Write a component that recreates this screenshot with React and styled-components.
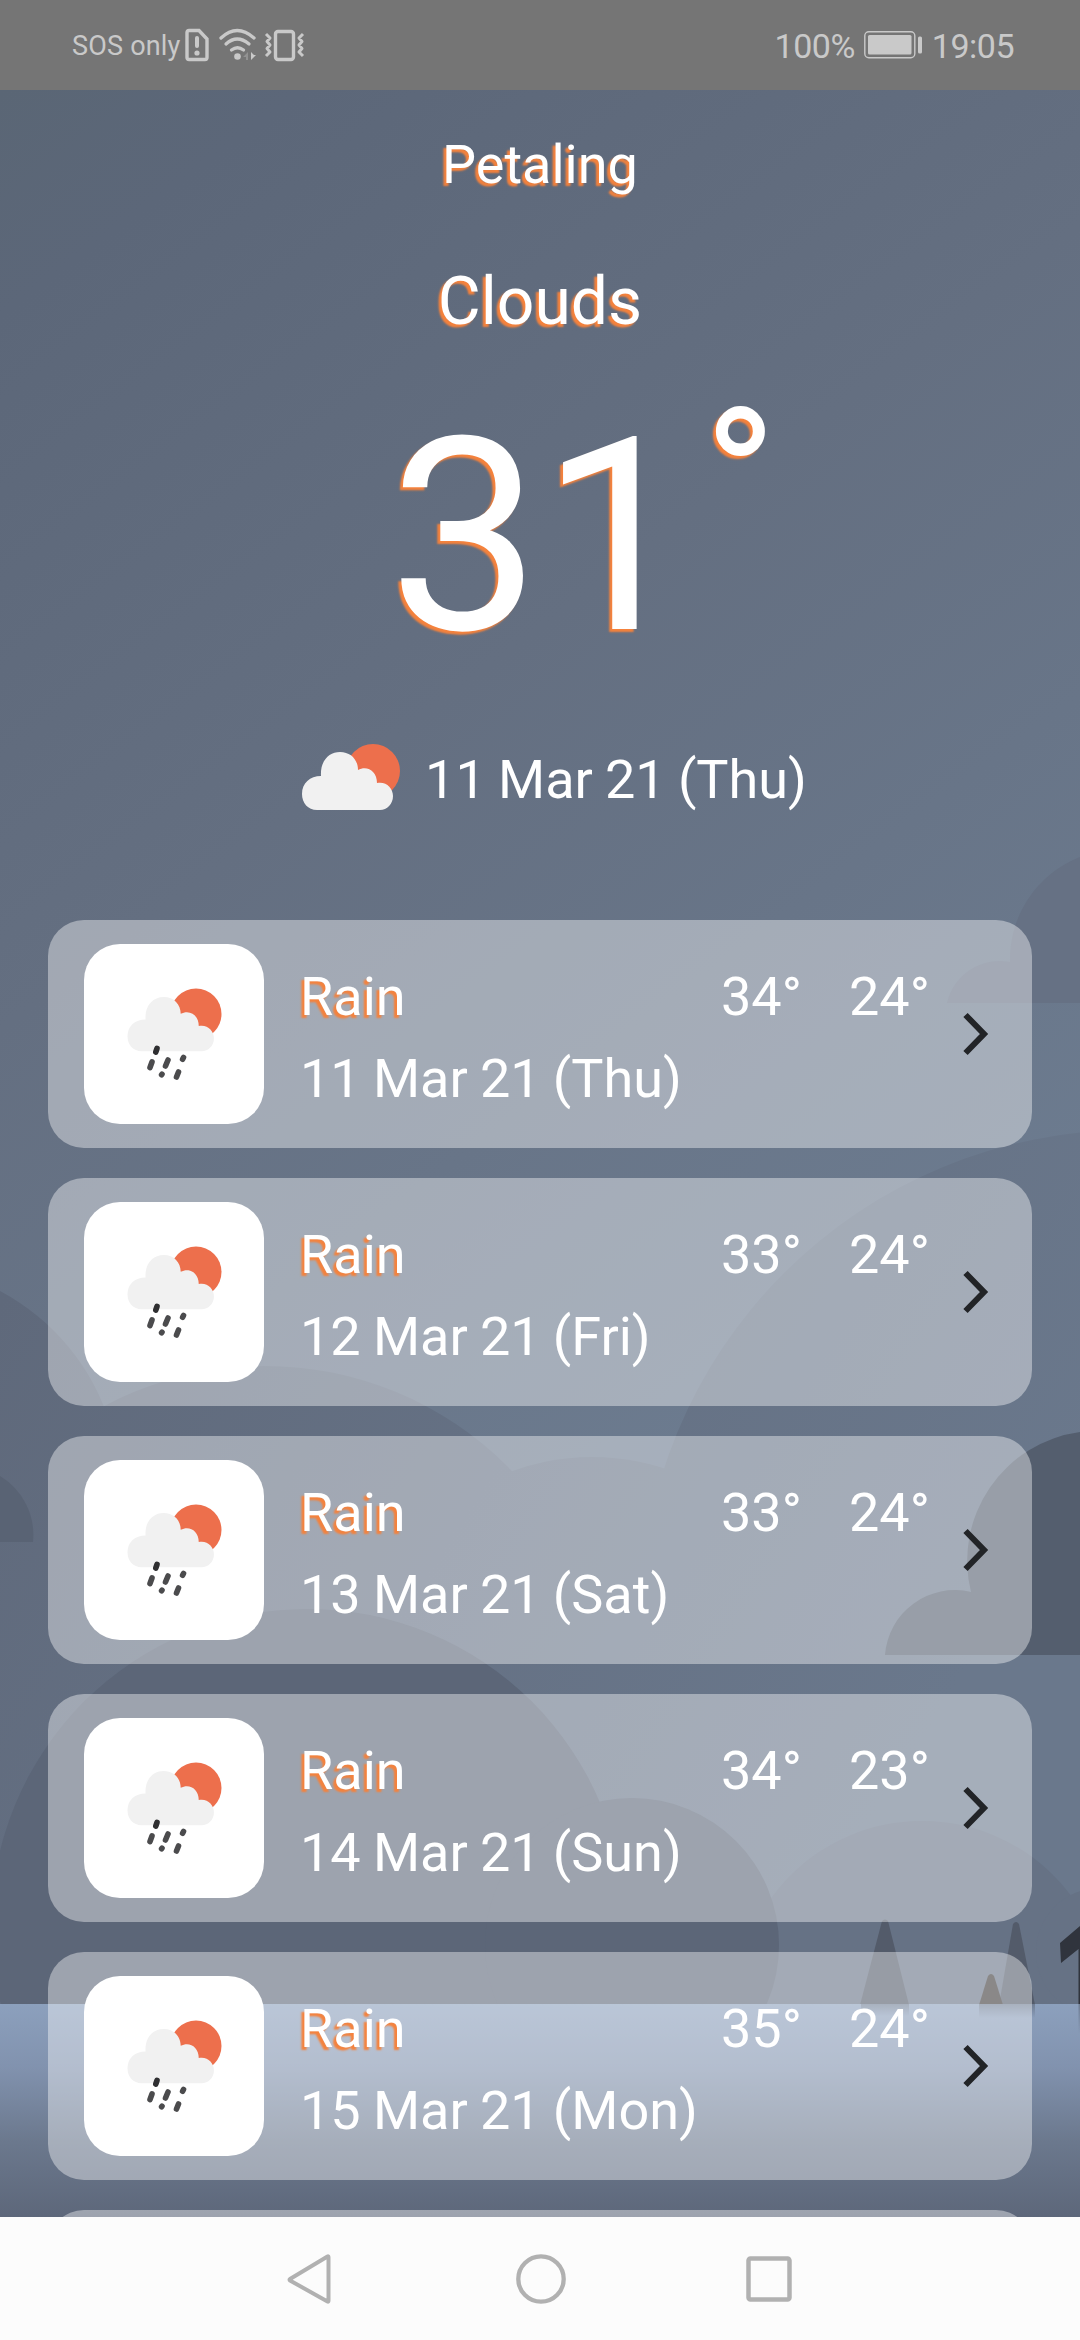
import React from "react";
import styled, { createGlobalStyle } from "styled-components";

const Global = createGlobalStyle`
  html, body { margin: 0; padding: 0; }
  body { font-family: Roboto, "Noto Sans", sans-serif; color: #fff; background: #fcfcfc; }
  * { box-sizing: border-box; }
`;

const Phone = styled.div`
  display: flex;
  flex-direction: column;
  width: 1080px;
  height: 2340px;
  overflow: hidden;
`;

const StatusBar = styled.header`
  display: flex;
  justify-content: space-between;
  flex: none;
  height: 90px;
  padding: 0 66px 0 72px;
  background: #757575;
  color: #c9c9c9;
`;

const StatusGroup = styled.div`
  display: flex;
  align-items: center;
  height: 90px;
`;

const Carrier = styled.span`
  font-size: 27px;
  line-height: 32px;
  letter-spacing: 0.2px;
  margin-right: 3px;
  padding-top: 1px;
`;

const StatusIcon = styled.svg`
  margin-left: ${(p) => p.$before || 0}px;
  margin-right: ${(p) => p.$after || 0}px;
`;

const StatusValue = styled.span`
  font-size: 34px;
  line-height: 40px;
  letter-spacing: -0.5px;
  padding-top: 2px;
`;

const Screen = styled.main`
  position: relative;
  flex: 1;
  overflow: hidden;
`;

const Scenery = styled.svg`
  position: absolute;
  inset: 0;
  width: 1080px;
  height: 2127px;
`;

const Content = styled.div`
  position: relative;
  display: flex;
  flex-direction: column;
`;

const Now = styled.section`
  display: flex;
  flex-direction: column;
  align-items: center;
  height: 830px;
`;

const glow = "text-shadow: -3px 3px 2px #f5823c;";

const City = styled.h1`
  margin: 43px 0 0;
  font-size: 54px;
  font-weight: 400;
  line-height: 64px;
  ${glow}
`;

const Condition = styled.h2`
  margin: 66px 0 0;
  font-size: 66px;
  font-weight: 400;
  line-height: 78px;
  ${glow}
`;

const Temperature = styled.div`
  display: flex;
  align-items: flex-start;
  height: 330px;
  margin-top: 38px;
  padding-left: 86px;
  ${glow}
`;

const Degrees = styled.span`
  font-size: 270px;
  line-height: 316px;
  margin-right: 11px;
`;

const DegreeMark = styled.span`
  font-size: 198px;
  line-height: 204px;
`;

const Today = styled.div`
  display: flex;
  align-items: center;
  gap: 24px;
  margin-top: 33px;
  padding-left: 28px;
`;

const DateText = styled.span`
  padding-top: 6px;
  font-size: 54px;
  line-height: 64px;
  word-spacing: -1.2px;
`;

const List = styled.ul`
  display: flex;
  flex-direction: column;
  gap: 30px;
  margin: 0;
  padding: 0 48px;
  list-style: none;
`;

const Card = styled.li`
  display: flex;
  align-items: center;
  flex: none;
  height: 228px;
  padding: 0 36px;
  border-radius: 36px;
  background: rgba(255, 255, 255, 0.4);
`;

const Tile = styled.div`
  display: flex;
  align-items: center;
  justify-content: center;
  flex: none;
  width: 180px;
  height: 180px;
  border-radius: 36px;
  background: #fff;
`;

const Details = styled.div`
  display: flex;
  flex-direction: column;
  gap: 18px;
  flex: 1;
  margin-left: 36px;
  padding-top: 7px;
`;

const Line = styled.div`
  display: flex;
  align-items: center;
  font-size: 54px;
  line-height: 64px;
  word-spacing: -1.2px;
`;

const Weather = styled.span`
  flex: 1;
  ${glow}
`;

const Temp = styled.span`
  width: 128px;

  &:last-child {
    width: 112px;
  }
`;

const Arrow = styled.svg`
  flex: none;
  margin-right: 5px;
`;

const NavBar = styled.nav`
  display: flex;
  align-items: center;
  justify-content: center;
  gap: 180px;
  flex: none;
  height: 123px;
  background: #fcfcfc;
`;

const BackGlyph = styled.svg`
  margin: 0 3px 0 -3px;
`;

const CLOUD = "M15 58 C6 58 0 51 0 42 C0 31 8 24 19 24 C18 9 27 0 38 0 C49 0 56 8 56 18 C65 13 75 19 75 31 C84 29 91 36 91 44 C91 52 85 58 78 58 Z";

const TodayIcon = () => (
  <svg width="100" height="68" viewBox="0 0 100 68">
    <circle cx="72" cy="28" r="27" fill="#ed6f4c" />
    <path d={CLOUD} transform="translate(1 9)" fill="#f1f1f1" />
  </svg>
);

const RainIcon = () => (
  <svg width="180" height="180" viewBox="84 944 180 180">
    <circle cx="196" cy="1014" r="25.500" fill="#ed6f4c" />
    <path d={CLOUD} transform="translate(127.500 997) scale(.95 .935)" fill="#f1f1f1" />
    <g stroke="#4b4b4d" strokeWidth="5.600" strokeLinecap="round">
      <path d="M157 1048.500l-1.200 3.500" stroke="#2f2f31" />
      <path d="M152 1062l-2 5.500M168 1060l-2.500 6M183.500 1057.500l-.9 1.800M162 1074.300l-.4 .5M178.500 1072l-2 5" />
    </g>
  </svg>
);

const Chevron = () => (
  <Arrow width="30" height="48" viewBox="0 0 30 48">
    <path d="M4.500 5L23 24L4.500 43" fill="none" stroke="#222427" strokeWidth="6" />
  </Arrow>
);

const SimIcon = () => (
  <StatusIcon width="26" height="34" viewBox="0 0 26 34">
    <path d="M5 2.500H15L23 11V29.500Q23 31.500 21 31.500H5Q3 31.500 3 29.500V4.500Q3 2.500 5 2.500Z" fill="none" stroke="#c9c9c9" strokeWidth="3.400" />
    <path d="M13 10V18" stroke="#c9c9c9" strokeWidth="4" strokeLinecap="round" />
    <circle cx="13" cy="25" r="2.600" fill="#c9c9c9" />
  </StatusIcon>
);

const WifiIcon = () => (
  <StatusIcon $before={8} $after={5} width="40" height="34" viewBox="0 0 40 34">
    <g fill="none" stroke="#c9c9c9" strokeWidth="3.300" strokeLinecap="round">
      <path d="M3 10Q19 -5 36 10" />
      <path d="M8 16Q19 6 31 16" />
      <path d="M13.500 22Q19.500 17.500 25.500 22" />
    </g>
    <circle cx="19.500" cy="28.500" r="3.300" fill="#c9c9c9" />
    <path d="M25 29L30 24V32H28V29Z" fill="#929292" />
    <path d="M33 24V32L38 27H36Z" fill="#c9c9c9" />
  </StatusIcon>
);

const VibrateIcon = () => (
  <StatusIcon width="44" height="34" viewBox="0 0 44 34">
    <rect x="12.500" y="3.500" width="18" height="28" rx="2.500" fill="none" stroke="#c9c9c9" strokeWidth="3.400" />
    <path d="M3 6L7 10L4 13.500L7 17L4 20.500L7 24L3 28M40 6L36 10L39 13.500L36 17L39 20.500L36 24L40 28" fill="none" stroke="#c9c9c9" strokeWidth="3" strokeLinejoin="round" />
  </StatusIcon>
);

const BatteryIcon = () => (
  <StatusIcon $before={9} $after={10} width="58" height="28" viewBox="0 0 58 28">
    <rect x=".8" y=".8" width="50" height="26" rx="4" fill="none" stroke="#c9c9c9" strokeWidth="1.400" />
    <rect x="4" y="4" width="43.500" height="19.500" rx="1.500" fill="#c9c9c9" />
    <rect x="54" y="5.500" width="4" height="17" rx="1.500" fill="#c9c9c9" />
  </StatusIcon>
);

const BackIcon = () => (
  <BackGlyph width="48" height="54" viewBox="0 0 48 54">
    <path d="M5 27L42.500 4.500Q43.500 4 43.500 5.500V48.500Q43.500 50 42.500 49.500L5 28.500Q4 27.800 5 27Z" fill="none" stroke="#b1b1b1" strokeWidth="4" strokeLinejoin="round" />
  </BackGlyph>
);

const HomeIcon = () => (
  <svg width="50" height="54" viewBox="0 0 50 54">
    <circle cx="25" cy="27" r="22.700" fill="none" stroke="#b1b1b1" strokeWidth="4.300" />
  </svg>
);

const RecentIcon = () => (
  <svg width="46" height="54" viewBox="0 0 46 54">
    <rect x="2.500" y="6.500" width="41" height="41" rx="2" fill="none" stroke="#b1b1b1" strokeWidth="4.500" />
  </svg>
);

const Landscape = () => (
  <Scenery viewBox="0 90 1080 2127">
    <defs>
      <linearGradient id="sky" gradientUnits="userSpaceOnUse" x1="0" y1="90" x2="900" y2="1300">
        <stop offset="0" stopColor="#5a6675" />
        <stop offset=".12" stopColor="#5c6779" />
        <stop offset=".5" stopColor="#646f81" />
        <stop offset="1" stopColor="#6c7b8f" />
      </linearGradient>
      <linearGradient id="bank" gradientUnits="userSpaceOnUse" x1="0" y1="1300" x2="850" y2="1850">
        <stop offset="0" stopColor="#5f697b" />
        <stop offset=".5" stopColor="#657184" />
        <stop offset="1" stopColor="#6a788c" />
      </linearGradient>
      <linearGradient id="water" x1="0" y1="0" x2="0" y2="1">
        <stop offset="0" stopColor="#8ca0bd" />
        <stop offset=".3" stopColor="#8192ae" />
        <stop offset=".65" stopColor="#6b788d" />
        <stop offset="1" stopColor="#5d677a" />
      </linearGradient>
      <linearGradient id="reflection" x1="0" y1="0" x2="0" y2="1">
        <stop offset="0" stopColor="#535b6a" stopOpacity=".5" />
        <stop offset="1" stopColor="#535b6a" stopOpacity="0" />
      </linearGradient>
    </defs>
    <rect y="90" width="1080" height="2127" fill="url(#sky)" />
    <path d="M947 1003A54 54 0 0 1 1010 962A110 110 0 0 1 1080 857V1003Z" fill="#667184" />
    <g fill="url(#bank)">
      <circle cx="-105" cy="1490" r="225" />
      <circle cx="265" cy="1709" r="343" />
      <circle cx="592" cy="1692" r="235" />
      <circle cx="1130" cy="1620" r="490" />
      <rect y="1690" width="1080" height="320" />
    </g>
    <g fill="#667285">
      <circle cx="922" cy="2007" r="186" />
      <circle cx="1100" cy="1952" r="64" />
    </g>
    <path d="M0 1476A69 69 0 0 1 33 1542H0Z" fill="#596374" />
    <path d="M885 1655A70 70 0 0 1 971 1592A130 130 0 0 1 1080 1432V1655Z" fill="#545e6e" />
    <g fill="#5c6678">
      <circle cx="308" cy="1926" r="317" />
      <circle cx="632" cy="1945" r="147" />
    </g>
    <path d="M882 1921Q885 1918 888 1921L909 2005H860Z" fill="#535b6a" />
    <path d="M1013 1924Q1016 1920 1019 1924L1035 2005H999Z" fill="#535b6a" />
    <path d="M988 1976Q991 1972 994 1976L1003 2005H979Z" fill="#3d3a3a" />
    <rect y="2004" width="1080" height="213" fill="url(#water)" />
    <g fill="url(#reflection)">
      <rect x="861" y="2004" width="48" height="12" />
      <rect x="979" y="2004" width="56" height="14" />
      <rect x="1078.500" y="2004" width="1.500" height="30" />
    </g>
    <path d="M1060 1943L1080 1926V2004H1078.500V1949L1061 1963Z" fill="#30343d" />
  </Scenery>
);

const forecast = [
  ["Rain", "11 Mar 21 (Thu)", 34, 24],
  ["Rain", "12 Mar 21 (Fri)", 33, 24],
  ["Rain", "13 Mar 21 (Sat)", 33, 24],
  ["Rain", "14 Mar 21 (Sun)", 34, 23],
  ["Rain", "15 Mar 21 (Mon)", 35, 24],
];

export default function App() {
  return (
    <Phone>
      <Global />
      <StatusBar>
        <StatusGroup>
          <Carrier>SOS only</Carrier>
          <SimIcon />
          <WifiIcon />
          <VibrateIcon />
        </StatusGroup>
        <StatusGroup>
          <StatusValue>100%</StatusValue>
          <BatteryIcon />
          <StatusValue>19:05</StatusValue>
        </StatusGroup>
      </StatusBar>
      <Screen>
        <Landscape />
        <Content>
          <Now>
            <City>Petaling</City>
            <Condition>Clouds</Condition>
            <Temperature>
              <Degrees>31</Degrees>
              <DegreeMark>°</DegreeMark>
            </Temperature>
            <Today>
              <TodayIcon />
              <DateText>11 Mar 21 (Thu)</DateText>
            </Today>
          </Now>
          <List>
            {forecast.map(([weather, date, high, low]) => (
              <Card key={date}>
                <Tile><RainIcon /></Tile>
                <Details>
                  <Line>
                    <Weather>{weather}</Weather>
                    <Temp>{high}°</Temp>
                    <Temp>{low}°</Temp>
                  </Line>
                  <Line>{date}</Line>
                </Details>
                <Chevron />
              </Card>
            ))}
            <Card />
          </List>
        </Content>
      </Screen>
      <NavBar>
        <BackIcon />
        <HomeIcon />
        <RecentIcon />
      </NavBar>
    </Phone>
  );
}
